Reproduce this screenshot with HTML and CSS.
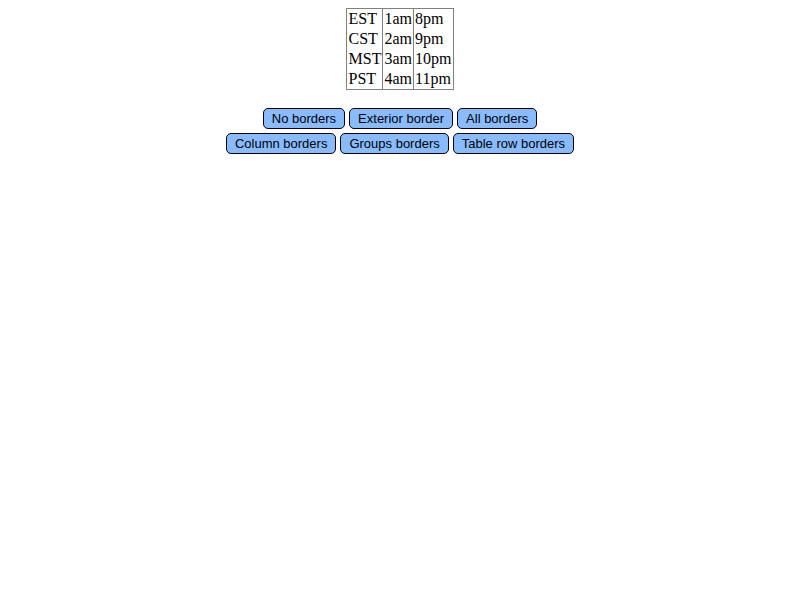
FILE: index.html
```html
<!DOCTYPE html>
<html>
<head>
<meta charset="utf-8">
<link rel="stylesheet" href="styles.css">
</head>
<body>
<table class="tz">
<colgroup><col><col><col></colgroup>
<tbody>
<tr><td>EST</td><td>1am</td><td>8pm</td></tr>
<tr><td>CST</td><td>2am</td><td>9pm</td></tr>
<tr><td>MST</td><td>3am</td><td>10pm</td></tr>
<tr><td>PST</td><td>4am</td><td>11pm</td></tr>
</tbody>
</table>
<div class="controls">
<div class="row">
<button class="btn">No borders</button>
<button class="btn">Exterior border</button>
<button class="btn">All borders</button>
</div>
<div class="row">
<button class="btn">Column borders</button>
<button class="btn">Groups borders</button>
<button class="btn">Table row borders</button>
</div>
</div>
</body>
</html>
```
FILE: styles.css
```css
body {
  margin: 8px;
  font-family: "Liberation Serif", serif;
  font-size: 16px;
  background: #fff;
  color: #000;
}
.tz {
  margin: 0 auto;
  border-collapse: collapse;
  border: 1px solid #808080;
}
.tz td {
  padding: 1px 1px;
  border-left: 1px solid #808080;
  line-height: 18px;
}
.tz td:first-child {
  border-left: none;
  padding-left: 2px;
}
.tz td:last-child {
  padding-right: 2px;
}
.controls {
  margin-top: 18px;
  display: flex;
  flex-direction: column;
  align-items: center;
  gap: 4px;
}
.row {
  display: flex;
  gap: 4px;
}
.btn {
  font-family: "Liberation Sans", Arial, sans-serif;
  font-size: 13px;
  height: 21px;
  padding: 0 8px;
  background: #88bbff;
  border: 1px solid #000;
  border-radius: 5px;
  color: #000;
}
```
